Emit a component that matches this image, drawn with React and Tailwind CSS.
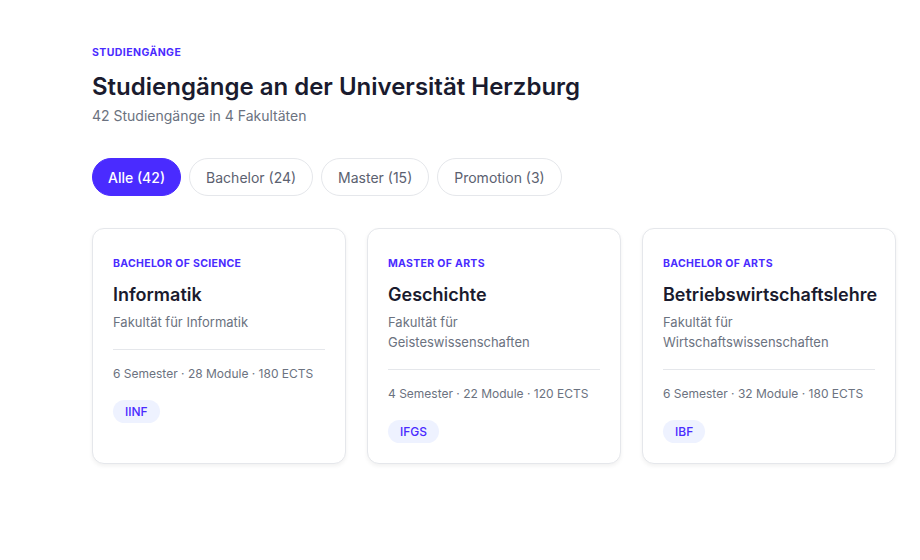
const filters = [
    { label: "Alle (42)", active: true },
    { label: "Bachelor (24)" },
    { label: "Master (15)" },
    { label: "Promotion (3)" },
];

const programs = [
    {
        degree: "Bachelor of Science",
        name: "Informatik",
        faculty: "Fakultät für Informatik",
        meta: "6 Semester · 28 Module · 180 ECTS",
        code: "IINF",
    },
    {
        degree: "Master of Arts",
        name: "Geschichte",
        faculty: "Fakultät für Geisteswissenschaften",
        meta: "4 Semester · 22 Module · 120 ECTS",
        code: "IFGS",
    },
    {
        degree: "Bachelor of Arts",
        name: "Betriebswirtschaftslehre",
        faculty: "Fakultät für Wirtschaftswissenschaften",
        meta: "6 Semester · 32 Module · 180 ECTS",
        code: "IBF",
    },
];

const ProgramCard = ({ degree, name, faculty, meta, code }) => {
    return (
        <div className="rounded-xl border border-[#e5e7eb] bg-white px-5 pt-[27px] pb-5 shadow-[0_2px_4px_rgba(0,0,0,0.06)]">
            <div className="text-[10.5px] leading-4 font-bold uppercase tracking-[0.03em] text-[#4a2bff]">{degree}</div>
            <h3 className="mt-[10px] text-[18px] leading-[25px] font-semibold text-[#1a1b2e]">{name}</h3>
            <p className="mt-[5px] text-[13px] leading-5 text-[#6b7280]">{faculty}</p>
            <div className="mt-[17px] h-px bg-[#e5e7eb]" />
            <div className="mt-4 text-[12px] leading-4 text-[#6b7280]">{meta}</div>
            <span className="mt-[18px] inline-block rounded-full bg-[#eef2ff] px-3 py-1 text-[12px] leading-[15px] font-medium text-[#4a2bff]">
                {code}
            </span>
        </div>
    );
};

const App = () => {
    return (
        <div className="min-h-screen bg-white font-['Inter','Liberation_Sans',sans-serif]">
            <section className="pl-[92px] pr-6 pt-[47px]">
                <div className="text-[10.5px] leading-3 font-bold uppercase tracking-[0.04em] text-[#4a2bff]">Studiengänge</div>
                <h1 className="mt-[12px] text-[24px] leading-8 font-semibold text-[#1a1b2e]">
                    Studiengänge an der Universität Herzburg
                </h1>
                <p className="mt-[3px] text-[14px] leading-5 text-[#6b7280]">42 Studiengänge in 4 Fakultäten</p>

                <div className="mt-8 flex gap-2">
                    {filters.map((f) => (
                        <button
                            key={f.label}
                            className={
                                f.active
                                    ? "h-[38px] rounded-full border border-[#4a2bff] bg-[#4a2bff] px-[15px] text-[14px] font-medium text-white"
                                    : "h-[38px] rounded-full border border-[#e5e7eb] bg-white px-4 text-[14px] text-[#5b6170]"
                            }
                        >
                            {f.label}
                        </button>
                    ))}
                </div>

                <div className="mt-8 grid grid-cols-3 gap-[21px]">
                    {programs.map((p) => (
                        <ProgramCard key={p.name} {...p} />
                    ))}
                </div>
            </section>
        </div>
    );
};

export default App;
